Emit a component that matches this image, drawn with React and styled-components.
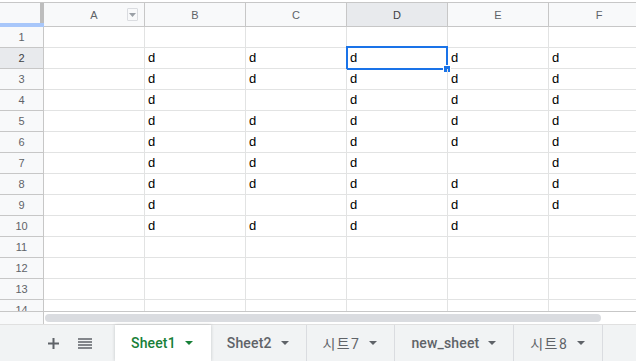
import React from "react";
import styled, { createGlobalStyle } from "styled-components";

const cols = ["A", "B", "C", "D", "E", "F"];

// which of B..F hold "d", rows 2..10
const data = {
  2: "BCDEF",
  3: "BCDEF",
  4: "BDEF",
  5: "BCDEF",
  6: "BCDEF",
  7: "BCDF",
  8: "BCDEF",
  9: "BDEF",
  10: "BCDE",
};

const tabs = [
  { name: "Sheet1", active: true },
  { name: "Sheet2" },
  { name: "시트7", cjk: true },
  { name: "new_sheet" },
  { name: "시트8", cjk: true },
];

const GlobalStyle = createGlobalStyle`
  html, body {
    margin: 0;
    padding: 0;
    background: #fff;
    overflow: hidden;
  }
  body {
    font-family: "Liberation Sans", Arial, sans-serif;
  }
`;

const App = () => {
  const rows = Array.from({ length: 14 }, (_, i) => i + 1);
  return (
    <>
      <GlobalStyle />
      <Page>
        <Grid>
          <Row>
            <Corner />
            {cols.map((c) => (
              <ColHeader key={c} selected={c === "D"}>
                {c}
                {c === "A" && (
                  <FilterBtn>
                    <svg width="7" height="4" viewBox="0 0 7 4">
                      <path d="M0 0h7L3.5 4z" fill="#9aa0a6" />
                    </svg>
                  </FilterBtn>
                )}
              </ColHeader>
            ))}
          </Row>
          {rows.map((r) => (
            <Row key={r} body>
              <RowHeader selected={r === 2}>{r}</RowHeader>
              {cols.map((c) => (
                <Cell key={c}>
                  {data[r] && data[r].includes(c) ? "d" : ""}
                  {r === 2 && c === "D" && (
                    <Selection>
                      <FillHandle />
                    </Selection>
                  )}
                </Cell>
              ))}
            </Row>
          ))}
        </Grid>
        <ScrollRow>
          <ScrollLeft />
          <Track>
            <Thumb />
          </Track>
        </ScrollRow>
        <TabBar>
          <Tools>
            <IconBtn>
              <svg width="11" height="11" viewBox="0 0 11 11">
                <path d="M5.5 0v11M0 5.5h11" stroke="#5f6368" strokeWidth="2" />
              </svg>
            </IconBtn>
            <IconBtn>
              <svg width="14" height="11" viewBox="0 0 14 11">
                <path
                  d="M0 1h14M0 4h14M0 7h14M0 10h14"
                  stroke="#5f6368"
                  strokeWidth="1.6"
                />
              </svg>
            </IconBtn>
          </Tools>
          {tabs.map((t) => (
            <Tab key={t.name} active={t.active}>
              <TabName cjk={t.cjk}>{t.name}</TabName>
              <svg width="8" height="4" viewBox="0 0 8 4">
                <path d="M0 0h8L4 4z" fill={t.active ? "#188038" : "#5f6368"} />
              </svg>
            </Tab>
          ))}
          <TabRest />
        </TabBar>
      </Page>
    </>
  );
};

const Page = styled.div`
  width: 636px;
  height: 361px;
  display: flex;
  flex-direction: column;
  padding-top: 2px;
  box-sizing: border-box;
  overflow: hidden;
`;

const Grid = styled.div`
  height: 309px;
  overflow: hidden;
  border-top: 1px solid #c7c7c7;
  box-sizing: border-box;
  flex-shrink: 0;
`;

const Row = styled.div`
  display: flex;
  height: ${(p) => (p.body ? "21px" : "24px")};
  box-sizing: border-box;
  border-bottom: 1px solid ${(p) => (p.body ? "#e2e3e3" : "#c7c7c7")};
`;

const Corner = styled.div`
  position: relative;
  width: 44px;
  flex-shrink: 0;
  background: #f8f9fa;
  border-right: 1px solid #c7c7c7;
  box-sizing: border-box;
  margin-bottom: -1px;

  &::after {
    content: "";
    position: absolute;
    right: -1px;
    top: 0;
    width: 4px;
    height: 20px;
    background: #bdbdbd;
  }
  &::before {
    content: "";
    position: absolute;
    left: 0;
    right: -1px;
    bottom: 0;
    height: 4px;
    background: #a8c7fa;
  }
`;

const ColHeader = styled.div`
  position: relative;
  width: 101px;
  flex-shrink: 0;
  box-sizing: border-box;
  border-right: 1px solid #c7c7c7;
  background: ${(p) => (p.selected ? "#e8eaed" : "#f8f9fa")};
  color: ${(p) => (p.selected ? "#3c4043" : "#5f6368")};
  font-size: 11px;
  display: flex;
  align-items: center;
  justify-content: center;
`;

const FilterBtn = styled.div`
  position: absolute;
  right: 6px;
  top: 5px;
  width: 11px;
  height: 13px;
  box-sizing: border-box;
  border: 1px solid #dadce0;
  border-radius: 1px;
  display: flex;
  align-items: center;
  justify-content: center;
`;

const RowHeader = styled.div`
  width: 44px;
  flex-shrink: 0;
  box-sizing: border-box;
  border-right: 1px solid #c7c7c7;
  background: ${(p) => (p.selected ? "#e8eaed" : "#f8f9fa")};
  color: ${(p) => (p.selected ? "#3c4043" : "#5f6368")};
  font-size: 11px;
  display: flex;
  align-items: center;
  justify-content: center;
  margin-bottom: -1px;
  border-bottom: 1px solid #c7c7c7;
`;

const Cell = styled.div`
  position: relative;
  width: 101px;
  flex-shrink: 0;
  box-sizing: border-box;
  border-right: 1px solid #e2e3e3;
  font-size: 13px;
  color: #000;
  padding: 0 3px 3px;
  display: flex;
  align-items: flex-end;
  line-height: 14px;
`;

const Selection = styled.div`
  position: absolute;
  left: -1px;
  top: -2px;
  right: -1px;
  bottom: -2px;
  border: 2px solid #1a73e8;
  pointer-events: none;
`;

const FillHandle = styled.div`
  position: absolute;
  right: -5px;
  bottom: -5px;
  width: 6px;
  height: 6px;
  background: #1a73e8;
  border: 1px solid #fff;
`;

const ScrollRow = styled.div`
  display: flex;
  height: 13px;
  flex-shrink: 0;
  border-top: 1px solid #c7c7c7;
  box-sizing: border-box;
`;

const ScrollLeft = styled.div`
  width: 44px;
  flex-shrink: 0;
  background: #f8f9fa;
  border-right: 1px solid #c7c7c7;
  box-sizing: border-box;
`;

const Track = styled.div`
  flex: 1;
  padding: 2px 0 2px 1px;
  box-sizing: border-box;
`;

const Thumb = styled.div`
  width: 556px;
  height: 100%;
  background: #dadce0;
  border-radius: 5px;
`;

const TabBar = styled.div`
  flex: 1;
  display: flex;
  background: #f1f3f4;
  border-top: 1px solid #e0e0e0;
`;

const Tools = styled.div`
  width: 115px;
  flex-shrink: 0;
  display: flex;
  align-items: center;
  padding-left: 48px;
  gap: 19px;
  box-sizing: border-box;
`;

const IconBtn = styled.div`
  display: flex;
  align-items: center;
  justify-content: center;
`;

const Tab = styled.div`
  display: flex;
  align-items: center;
  gap: 9px;
  padding: 0 17px 0 16px;
  font-family: Roboto, "Noto Sans CJK KR", sans-serif;
  font-size: 14px;
  font-weight: 500;
  color: ${(p) => (p.active ? "#188038" : "#5f6368")};
  background: ${(p) => (p.active ? "#fff" : "transparent")};
  border-right: 1px solid ${(p) => (p.active ? "transparent" : "#dadce0")};
  box-shadow: ${(p) =>
    p.active ? "0 0 3px rgba(60, 64, 67, 0.25)" : "none"};
  position: relative;
  z-index: ${(p) => (p.active ? 1 : 0)};
`;

const TabName = styled.span`
  letter-spacing: ${(p) => (p.cjk ? "1.4px" : "0.15px")};
  font-weight: ${(p) => (p.cjk ? 400 : 500)};
`;

const TabRest = styled.div`
  flex: 1;
`;

export default App;
